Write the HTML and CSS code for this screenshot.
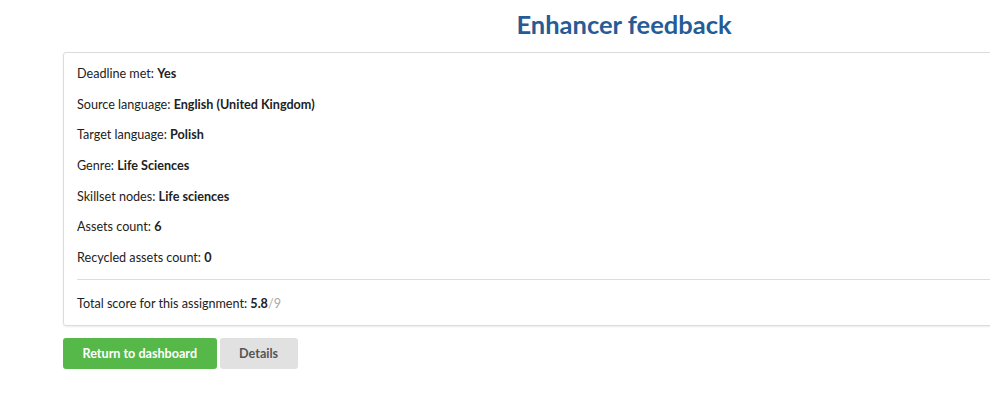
FILE: index.html
```html
<!DOCTYPE html>
<html lang="en">
<head>
<meta charset="utf-8">
<title>Enhancer feedback</title>
<link rel="stylesheet" href="styles.css">
</head>
<body>
<main class="page">
  <h1 class="page-title">Enhancer feedback</h1>
  <section class="card">
    <div class="facts">
      <p class="fact">Deadline met: <b>Yes</b></p>
      <p class="fact">Source language: <b>English (United Kingdom)</b></p>
      <p class="fact">Target language: <b>Polish</b></p>
      <p class="fact">Genre: <b>Life Sciences</b></p>
      <p class="fact">Skillset nodes: <b>Life sciences</b></p>
      <p class="fact">Assets count: <b>6</b></p>
      <p class="fact">Recycled assets count: <b>0</b></p>
    </div>
    <hr class="divider">
    <p class="fact total">Total score for this assignment: <b>5.8</b><span class="max">/9</span></p>
  </section>
  <div class="actions">
    <button class="btn btn-primary" type="button">Return to dashboard</button>
    <button class="btn btn-muted" type="button">Details</button>
  </div>
</main>
</body>
</html>
```

FILE: styles.css
```css
html {
  overflow: hidden;
}

body {
  margin: 0;
  background: #ffffff;
  font-family: Lato, "Open Sans", sans-serif;
  color: #222222;
}

.page {
  width: 1122px;
  margin-left: 63px;
  padding-top: 9px;
}

.page-title {
  margin: 0 0 13px;
  text-align: center;
  font-size: 25.5px;
  line-height: 30px;
  font-weight: 700;
  color: #265c95;
}

.card {
  border: 1px solid #dcdcdc;
  border-radius: 3px;
  box-shadow: 0 1px 2px rgba(0, 0, 0, 0.08);
  padding: 12px 13px 12px;
}

.facts {
  display: flex;
  flex-direction: column;
  gap: 12.7px;
}

.fact {
  margin: 0;
  font-size: 12.6px;
  line-height: 18px;
}

.fact b {
  font-weight: 700;
}

.divider {
  border: 0;
  border-top: 1px solid #dddddd;
  margin: 12px 0 15px;
}

.max {
  color: #aaaaaa;
}

.actions {
  display: flex;
  gap: 3px;
  margin-top: 12px;
}

.btn {
  height: 31px;
  border: 0;
  border-radius: 3px;
  padding: 0 19.5px;
  font-family: Lato, "Open Sans", sans-serif;
  font-size: 12.6px;
  font-weight: 700;
  cursor: pointer;
}

.btn-primary {
  background: #56b848;
  color: #ffffff;
}

.btn-muted {
  padding: 0 19.5px;
  background: #e1e1e1;
  color: #555555;
}
```
